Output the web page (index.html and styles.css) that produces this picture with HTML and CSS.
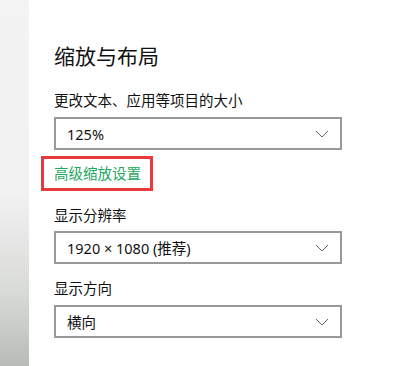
FILE: index.html
```html
<!DOCTYPE html>
<html lang="zh-CN">
<head>
<meta charset="utf-8">
<link rel="stylesheet" href="styles.css">
</head>
<body>
<div class="app">
  <div class="sidebar"></div>
  <main class="main">
    <h1 class="title">缩放与布局</h1>
    <div class="label first">更改文本、应用等项目的大小</div>
    <div class="select s1"><span>125%</span><svg class="chev" width="14" height="8" viewBox="0 0 14 8"><path d="M1 1 L7 7 L13 1" fill="none" stroke="#666" stroke-width="1"/></svg></div>
    <div class="link-box"><a class="link">高级缩放设置</a></div>
    <div class="label">显示分辨率</div>
    <div class="select"><span>1920 × 1080 (推荐)</span><svg class="chev" width="14" height="8" viewBox="0 0 14 8"><path d="M1 1 L7 7 L13 1" fill="none" stroke="#666" stroke-width="1"/></svg></div>
    <div class="label">显示方向</div>
    <div class="select s3"><span>横向</span><svg class="chev" width="14" height="8" viewBox="0 0 14 8"><path d="M1 1 L7 7 L13 1" fill="none" stroke="#666" stroke-width="1"/></svg></div>
  </main>
</div>
</body>
</html>
```
FILE: styles.css
```css
html, body {
  margin: 0;
  padding: 0;
  background: #ffffff;
}
body {
  font-family: "Noto Sans", "Noto Sans CJK SC", sans-serif;
  color: #1a1a1a;
}
.app {
  display: flex;
  width: 400px;
  height: 366px;
  overflow: hidden;
}
.sidebar {
  width: 29px;
  flex: 0 0 29px;
  background: linear-gradient(to bottom, #f3f3f3 0px, #f2f2f2 190px, #d9dbd8 290px, #b8bcb7 366px);
}
.main {
  flex: 1;
  padding-left: 25px;
  padding-top: 42px;
}
.title {
  margin: 0;
  font-size: 21px;
  font-weight: normal;
  line-height: 28px;
  color: #111;
}
.label {
  font-size: 14.5px;
  line-height: 20px;
  margin-top: 14px;
  color: #111;
}
.label.first {
  margin-top: 20px;
}
.select {
  box-sizing: border-box;
  width: 288px;
  height: 33px;
  margin-top: 6px;
  border: 2px solid #999;
  display: flex;
  align-items: center;
  justify-content: space-between;
  padding: 0 8px 0 11px;
  font-size: 14.5px;
  color: #111;
}
.select.s1 { margin-top: 7px; }
.select.s3 { margin-top: 7px; }
.chev {
  display: block;
  margin-top: 1px;
  margin-right: 3px;
}
.link-box {
  box-sizing: border-box;
  display: inline-block;
  margin-top: 6px;
  margin-left: -13px;
  width: 112px;
  height: 35px;
  border: 3px solid #e8393e;
  padding-left: 10px;
  line-height: 29px;
}
.link {
  font-size: 14.5px;
  color: #1fa862;
  white-space: nowrap;
}
```
